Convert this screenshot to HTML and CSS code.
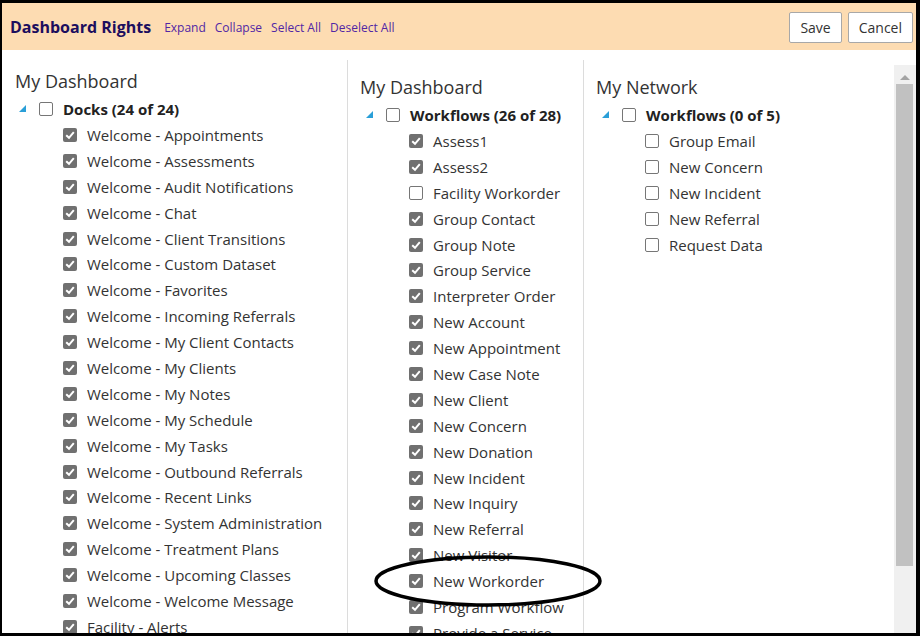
FILE: index.html
```html
<!DOCTYPE html>
<html lang="en">
<head>
  <meta charset="UTF-8">
  <title>Dashboard Rights</title>
  <link rel="stylesheet" href="styles.css">
</head>
<body>

<div class="frame">

  <div class="header">
    <h1>Dashboard Rights</h1>
    <a href="#">Expand</a>
    <a href="#">Collapse</a>
    <a href="#">Select All</a>
    <a href="#">Deselect All</a>
    <div class="actions">
      <button>Save</button>
      <button>Cancel</button>
    </div>
  </div>

  <div class="content">
    <div class="columns">

      <!-- docks -->
      <div class="col col-docks">
        <h2>My Dashboard</h2>
        <div class="group">
          <span class="tri"><svg width="7" height="7" viewBox="0 0 7 7"><polygon points="7,0 7,7 0,7" fill="#2a9fd8"/></svg></span>
          <span class="cb"></span>
          <b>Docks (24 of 24)</b>
        </div>
        <ul class="items">
          <li><span class="cb on"></span>Welcome - Appointments</li>
          <li><span class="cb on"></span>Welcome - Assessments</li>
          <li><span class="cb on"></span>Welcome - Audit Notifications</li>
          <li><span class="cb on"></span>Welcome - Chat</li>
          <li><span class="cb on"></span>Welcome - Client Transitions</li>
          <li><span class="cb on"></span>Welcome - Custom Dataset</li>
          <li><span class="cb on"></span>Welcome - Favorites</li>
          <li><span class="cb on"></span>Welcome - Incoming Referrals</li>
          <li><span class="cb on"></span>Welcome - My Client Contacts</li>
          <li><span class="cb on"></span>Welcome - My Clients</li>
          <li><span class="cb on"></span>Welcome - My Notes</li>
          <li><span class="cb on"></span>Welcome - My Schedule</li>
          <li><span class="cb on"></span>Welcome - My Tasks</li>
          <li><span class="cb on"></span>Welcome - Outbound Referrals</li>
          <li><span class="cb on"></span>Welcome - Recent Links</li>
          <li><span class="cb on"></span>Welcome - System Administration</li>
          <li><span class="cb on"></span>Welcome - Treatment Plans</li>
          <li><span class="cb on"></span>Welcome - Upcoming Classes</li>
          <li><span class="cb on"></span>Welcome - Welcome Message</li>
          <li><span class="cb on"></span>Facility - Alerts</li>
        </ul>
      </div>

      <!-- workflows -->
      <div class="col col-flows">
        <h2>My Dashboard</h2>
        <div class="group">
          <span class="tri"><svg width="7" height="7" viewBox="0 0 7 7"><polygon points="7,0 7,7 0,7" fill="#2a9fd8"/></svg></span>
          <span class="cb"></span>
          <b>Workflows (26 of 28)</b>
        </div>
        <ul class="items">
          <li><span class="cb on"></span>Assess1</li>
          <li><span class="cb on"></span>Assess2</li>
          <li><span class="cb"></span>Facility Workorder</li>
          <li><span class="cb on"></span>Group Contact</li>
          <li><span class="cb on"></span>Group Note</li>
          <li><span class="cb on"></span>Group Service</li>
          <li><span class="cb on"></span>Interpreter Order</li>
          <li><span class="cb on"></span>New Account</li>
          <li><span class="cb on"></span>New Appointment</li>
          <li><span class="cb on"></span>New Case Note</li>
          <li><span class="cb on"></span>New Client</li>
          <li><span class="cb on"></span>New Concern</li>
          <li><span class="cb on"></span>New Donation</li>
          <li><span class="cb on"></span>New Incident</li>
          <li><span class="cb on"></span>New Inquiry</li>
          <li><span class="cb on"></span>New Referral</li>
          <li><span class="cb on"></span>New Visitor</li>
          <li><span class="cb on"></span>New Workorder</li>
          <li><span class="cb on"></span>Program Workflow</li>
          <li><span class="cb on"></span>Provide a Service</li>
        </ul>
      </div>

      <!-- network -->
      <div class="col col-network">
        <h2>My Network</h2>
        <div class="group">
          <span class="tri"><svg width="7" height="7" viewBox="0 0 7 7"><polygon points="7,0 7,7 0,7" fill="#2a9fd8"/></svg></span>
          <span class="cb"></span>
          <b>Workflows (0 of 5)</b>
        </div>
        <ul class="items">
          <li><span class="cb"></span>Group Email</li>
          <li><span class="cb"></span>New Concern</li>
          <li><span class="cb"></span>New Incident</li>
          <li><span class="cb"></span>New Referral</li>
          <li><span class="cb"></span>Request Data</li>
        </ul>
      </div>

    </div>

    <div class="scrollbar">
      <span class="arrow"></span>
      <span class="thumb"></span>
    </div>

    <!-- hand drawn mark around New Workorder -->
    <svg class="mark" width="232" height="56" viewBox="0 0 232 56">
      <ellipse cx="116" cy="28" rx="112" ry="24" fill="none" stroke="#000" stroke-width="3.5"/>
    </svg>
  </div>

</div>

</body>
</html>
```

FILE: styles.css
```css
body {
  margin: 0;
  font-family: "Open Sans", Arial, sans-serif;
  color: #333;
}
.frame {
  width: 920px;
  height: 636px;
  box-sizing: border-box;
  border: solid #000;
  border-width: 3px 4px 3px 2px;
  display: flex;
  flex-direction: column;
  overflow: hidden;
}
.header {
  height: 47px;
  background-color: #fddcb2;
  display: flex;
  align-items: center;
  padding: 1px 0 0 8px;
  box-sizing: border-box;
  flex-shrink: 0;
}
.header h1 {
  margin: 0 13px 0 0;
  font-size: 16px;
  font-weight: bold;
  color: #1c0e5e;
}
.header a {
  font-size: 12px;
  color: #5127a5;
  text-decoration: none;
  margin-right: 9px;
}
.actions {
  margin-left: auto;
  display: flex;
  gap: 6px;
  padding-right: 3px;
}
.actions button {
  height: 31px;
  background: white;
  border: 1px solid #a8a8a8;
  border-radius: 2px;
  font-family: "Open Sans", Arial, sans-serif;
  font-size: 14px;
  color: #333;
  padding: 0 10px;
}
.content {
  flex: 1;
  display: flex;
  position: relative;
  overflow: hidden;
}
.columns {
  flex: 1;
  display: flex;
  padding-top: 10px;
}
.col {
  border-right: 1px solid #dcdcdc;
  overflow: hidden;
  box-sizing: border-box;
}
.col-docks {
  width: 346px;
  padding: 9px 0 0 13px;
}
.col-flows {
  width: 236px;
  padding: 15px 0 0 12px;
}
.col-network {
  flex: 1;
  border-right: none;
  padding: 15px 0 0 12px;
}
h2 {
  margin: 0 0 3px;
  font-size: 18px;
  font-weight: normal;
  line-height: 24px;
  color: #333;
}
.group {
  height: 26px;
  display: flex;
  align-items: center;
  padding-left: 6px;
  font-size: 15px;
}
.col-docks .group {
  padding-left: 4px;
}
.group b {
  color: #222;
}
.tri {
  width: 20px;
  display: flex;
  padding-bottom: 2px;
}
.cb {
  width: 12px;
  height: 12px;
  border: 1px solid #767676;
  border-radius: 2px;
  background: white;
  margin-right: 10px;
  flex-shrink: 0;
}
.cb.on {
  width: 14px;
  height: 14px;
  border: none;
  background: #707070 url("data:image/svg+xml,%3Csvg xmlns='http://www.w3.org/2000/svg' viewBox='0 0 14 14'%3E%3Cpath d='M3.2 7.2 L6 9.8 L10.8 4.2' fill='none' stroke='white' stroke-width='2'/%3E%3C/svg%3E") center/14px no-repeat;
}
.items {
  list-style: none;
  margin: 0;
  padding: 0 0 0 48px;
}
.col-flows .items {
  padding-left: 49px;
}
.col-network .items {
  padding-left: 49px;
}
.items li {
  height: 25.9px;
  display: flex;
  align-items: center;
  font-size: 15px;
  white-space: nowrap;
}
.scrollbar {
  width: 22px;
  margin-top: 15px;
  background: #f0f0f0;
  position: relative;
  flex-shrink: 0;
}
.scrollbar .arrow {
  position: absolute;
  top: 10px;
  left: 6px;
  border: 5px solid transparent;
  border-top: 0;
  border-bottom: 5px solid #a3a3a3;
}
.scrollbar .thumb {
  position: absolute;
  top: 19px;
  left: 2px;
  width: 17px;
  height: 482px;
  background: #c1c1c1;
}
.mark {
  position: absolute;
  left: 370px;
  top: 503px;
}
```
